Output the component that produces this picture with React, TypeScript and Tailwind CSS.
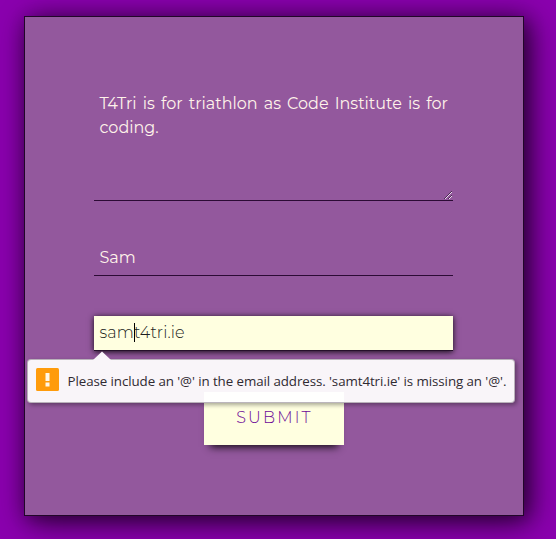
const field = "font-['Montserrat','Inter',sans-serif] text-[16px] leading-6";

function ResizeGrip() {
  return (
    <svg className="absolute right-px bottom-px" width="8" height="8" viewBox="0 0 8 8" fill="none">
      <path d="M0 8L8 0M4 8L8 4" stroke="#4b2953" strokeWidth="1" />
      <path d="M1 8L8 1M5 8L8 5" stroke="#ead9ec" strokeWidth="1" />
    </svg>
  );
}

function ValidationBubble() {
  return (
    <div className="absolute top-[43px] -left-[67px] z-10 flex h-[44px] w-[488px] items-center rounded-[4px] border border-[#8d8490]/60 bg-white/94 pl-2 shadow-[2px_2px_4px_rgba(0,0,0,0.35)]">
      <svg className="absolute -top-[9px] left-[65px]" width="18" height="9" viewBox="0 0 18 9">
        <path d="M0 9L9 0.5L18 9Z" fill="#faf5fb" />
      </svg>
      <svg className="-mt-[4px] shrink-0" width="23" height="23" viewBox="0 0 23 23">
        <rect width="23" height="23" rx="1.5" fill="#ff9b0b" />
        <path d="M9.5 5h4v8h-4zM9.5 14.5h4v4h-4z" fill="#fff7e8" />
      </svg>
      <span className="ml-[8.5px] whitespace-nowrap font-['Segoe_UI','Open_Sans',sans-serif] text-[13.33px] font-normal tracking-[-0.08px] text-[#302a32]">
        Please include an '@' in the email address. 'samt4tri.ie' is missing an '@'.
      </span>
    </div>
  );
}

export default function App() {
  return (
    <main className="h-[539px] w-[556px] overflow-hidden bg-[#8b00af] pt-4 pl-6">
      <form className="flex h-[500px] w-[500px] flex-col border border-[#210629] bg-[#93589d] pt-[69px] pr-[70px] pl-[69px] shadow-[5px_5px_30px_rgba(0,0,0,0.7),3px_3px_16px_rgba(0,0,0,0.3)]">
        <div className={`${field} relative h-[115px] border-b border-[#2c0b35] pt-[6px] pl-[5.5px] font-normal text-[#fff3ea]`}>
          <div className="whitespace-nowrap tracking-[-0.02px] [word-spacing:2px]">T4Tri is for triathlon as Code Institute is for</div>
          <div>coding.</div>
          <ResizeGrip />
        </div>
        <div className={`${field} mt-[40px] h-[35px] border-b border-[#2c0b35] pt-[5px] pl-[5.5px] font-normal text-[#fff3ea]`}>Sam</div>
        <div className={`${field} relative mt-[40px] h-[35px] border-b border-[#25102b] bg-[#ffffe0] pt-[5px] pl-[5.5px] font-light text-[#1c1e20] shadow-[0_1px_6px_rgba(0,0,0,0.9)]`}>
          <span className="tracking-[0.12px]">sam<span className="-mr-px inline-block h-[19px] w-px bg-black align-[-4px]" />t4tri.ie</span>
          <ValidationBubble />
        </div>
        <button type="button" className="mt-[41px] flex h-[53px] w-[140px] items-center justify-center self-center bg-[#ffffe0] pb-px pl-[2px] font-['Montserrat','Inter',sans-serif] text-[16px] font-light tracking-[2.2px] text-[#6d0a98] shadow-[0_8px_8px_-6px_rgba(0,0,0,0.9)]">
          SUBMIT
        </button>
      </form>
    </main>
  );
}
